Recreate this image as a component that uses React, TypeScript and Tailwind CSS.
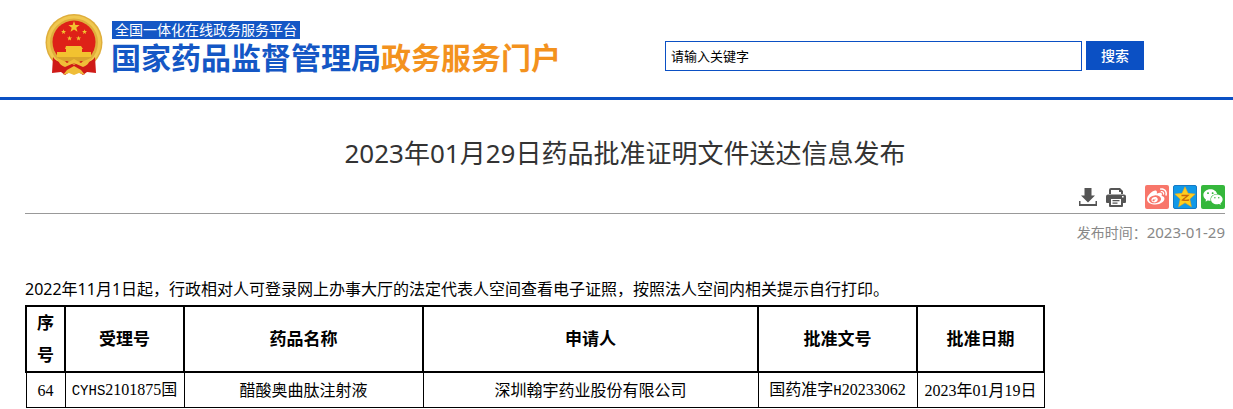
import type { ReactNode } from 'react'
import { FaWeibo } from 'react-icons/fa'
import { AiFillWechat } from 'react-icons/ai'

type Approval = {
  no: string
  acceptNo: string
  drug: string
  applicant: string
  approvalNo: string
  date: string
}

const approvals: Approval[] = [
  {
    no: '64',
    acceptNo: 'CYHS2101875国',
    drug: '醋酸奥曲肽注射液',
    applicant: '深圳翰宇药业股份有限公司',
    approvalNo: '国药准字H20233062',
    date: '2023年01月19日',
  },
]

// Digits are half as wide as a Chinese character, capitals are set smaller
function CodeText({ text }: { text: string }) {
  return (
    <>
      {text.split(/([A-Z]+|[0-9]+)/).map((part, i) => {
        if (/^[0-9]+$/.test(part)) {
          return (
            <span key={i} className="font-['Liberation_Serif',serif]">
              {part}
            </span>
          )
        }
        if (/^[A-Z]+$/.test(part)) {
          return (
            <span
              key={i}
              className="font-['Liberation_Mono',monospace] text-[14px]"
            >
              {part}
            </span>
          )
        }
        return part
      })}
    </>
  )
}

function Emblem() {
  return (
    <svg viewBox="0 0 58 62" className="h-[62px] w-[58px] shrink-0" aria-hidden="true">
      <circle cx="29" cy="28.500" r="28.500" fill="#dfae3c" />
      <circle cx="29" cy="28.500" r="25.500" fill="none" stroke="#f0c850" strokeWidth="3" />
      <circle cx="29" cy="28" r="21.500" fill="#de2118" />
      <g fill="#f2c230">
        <path id="star" d="M29 7l1.400 4 4.200.1-3.300 2.600 1.200 4.100-3.500-2.400-3.500 2.400 1.200-4.100-3.300-2.600 4.200-.1z" />
        <use href="#star" transform="translate(5.500 12) scale(.45)" />
        <use href="#star" transform="translate(26.500 12) scale(.45)" />
        <use href="#star" transform="translate(11.500 18.500) scale(.45)" />
        <use href="#star" transform="translate(20.500 18.500) scale(.45)" />
        <path d="M21 32h15l2 3h-1v3h9v5H12v-5h9v-3h-1z" />
      </g>
      <path d="M12 43h34l-6 6H18z" fill="#d9a52c" />
      <path d="M8 43c3 5 8 6 14 4l7 4 7-4c6 2 11 1 14-4l1 16-9-1-4 3-9-6-9 6-4-3-9 1z" fill="#cf1a17" />
      <path d="M12 44c4 2 7 2 10 5l7-4 7 4c3-3 6-3 10-5-2 6-5 8-8 9l-9-4-9 4c-3-1-6-3-8-9z" fill="#efbd38" />
      <path d="M18 61l4-5 7-4 7 4 4 5-6-2-5 2-5-2z" fill="#efbd38" />
    </svg>
  )
}

function DownloadIcon() {
  return (
    <svg viewBox="0 0 18 18" className="h-[18px] w-[18px]" fill="#555">
      <path d="M5.500 0h7v7.500h3.500L9 14.500 2 7.500h3.500z" />
      <path d="M0 13h1.500v3h15v-3H18v5H0z" />
    </svg>
  )
}

function PrintIcon() {
  return (
    <svg viewBox="0 0 20 19" className="h-[19px] w-5" fill="#555">
      <path d="M3 6V2a2 2 0 0 1 2-2h9l3 3v3h-2V4h-2V2H5v4z" />
      <path
        fillRule="evenodd"
        d="M2 6.500h16a2 2 0 0 1 2 2V14a1 1 0 0 1-1 1h-2v3a1 1 0 0 1-1 1H4a1 1 0 0 1-1-1v-3H1a1 1 0 0 1-1-1V8.500a2 2 0 0 1 2-2zM5 11v6h10v-6zM16 8v1.500h1.600V8z"
      />
      <path d="M6.500 12h7v1.300h-7zM6.500 14.500h5v1.300h-5z" />
    </svg>
  )
}

function QzoneIcon() {
  return (
    <svg viewBox="0 0 22 22" className="h-[22px] w-[22px]">
      <path
        d="M11 .8l3 6.500 7.200.8-5.400 5 1.600 7.600-6.400-3.900-6.400 3.900 1.600-7.600-5.400-5 7.200-.8z"
        fill="#ffce1f"
        stroke="#f0a818"
        strokeWidth=".6"
        strokeLinejoin="round"
      />
      <path d="M7.500 9.500h6.500L8.500 14c2 .5 4.500.5 6.500 0" fill="none" stroke="#c8690c" strokeWidth="1.300" />
    </svg>
  )
}

function Th({ className = '', children }: { className?: string; children: ReactNode }) {
  return (
    <th className={`border-2 border-black p-0 text-[17px] leading-8 font-bold ${className}`}>
      {children}
    </th>
  )
}

function Td({ text }: { text: string }) {
  return (
    <td className="h-[35px] border border-black p-0 text-center text-base leading-8 whitespace-nowrap">
      <CodeText text={text} />
    </td>
  )
}

export default function App() {
  return (
    <div className="bg-white font-['Noto_Sans','Noto_Sans_CJK_SC',sans-serif] text-black">
      <header className="flex h-[100px] items-start border-b-3 border-[#0b50c4] pl-[45px]">
        <a href="#" className="mt-[14px] flex">
          <Emblem />
          <span className="ml-2 flex flex-col items-start pt-[7px]">
            <span className="ml-px bg-[#1457c5] px-[3px] text-[14px] leading-[18px] text-white">
              全国一体化在线政务服务平台
            </span>
            <span className="text-[30px] leading-[38px] font-bold whitespace-nowrap text-[#1457c5]">
              国家药品监督管理局
              <span className="text-[#f3921e]">政务服务门户</span>
            </span>
          </span>
        </a>

        <form className="mt-[41px] mr-[89px] ml-[104px] flex flex-1 items-start gap-1">
          <input
            type="text"
            aria-label="关键字"
            defaultValue="请输入关键字"
            className="h-[30px] min-w-0 flex-1 border border-[#0b50c4] px-[5px] pb-0.5 text-[13px]"
          />
          <button
            type="button"
            className="h-[29px] w-[58px] bg-[#0b50c4] text-[14px] font-medium text-white"
          >
            搜索
          </button>
        </form>
      </header>

      <main className="mr-2 ml-[25px]">
        <h1 className="pt-[33px] text-center text-[26px] leading-10 text-[#333]">
          2023年01月29日药品批准证明文件送达信息发布
        </h1>

        <div className="mt-3 flex h-[29px] items-start justify-end border-b border-[#999]">
          <button type="button" aria-label="下载" className="mt-[3px] mr-[9px]">
            <DownloadIcon />
          </button>
          <button type="button" aria-label="打印" className="mt-[3px] mr-[19px]">
            <PrintIcon />
          </button>
          <div className="flex gap-1">
            <a
              href="#"
              aria-label="微博"
              className="flex h-6 w-6 items-center justify-center rounded-xs bg-[#f8766a] text-white"
            >
              <FaWeibo size={20} />
            </a>
            <a
              href="#"
              aria-label="QQ空间"
              className="h-6 w-6 overflow-hidden rounded-xs border border-[#1579c4] bg-[#1199e8]"
            >
              <QzoneIcon />
            </a>
            <a
              href="#"
              aria-label="微信"
              className="flex h-6 w-6 items-center justify-center rounded-xs bg-[#35b73c] text-white"
            >
              <AiFillWechat size={22} />
            </a>
          </div>
        </div>
        <p className="mt-[7px] text-right text-[14px] leading-6 text-[#888]">
          发布时间：<time className="text-[15px] leading-4">2023-01-29</time>
        </p>

        <p className="mt-7 text-base leading-8">
          2022年11月1日起，行政相对人可登录网上办事大厅的法定代表人空间查看电子证照，按照法人空间内相关提示自行打印。
        </p>
        <table className="w-[85%] table-fixed border-collapse">
          <colgroup>
            <col className="w-[39px]" />
            <col className="w-[119px]" />
            <col className="w-[239px]" />
            <col />
            <col className="w-[159px]" />
            <col className="w-[127px]" />
          </colgroup>
          <thead>
            <tr>
              <Th className="px-2">序号</Th>
              <Th>受理号</Th>
              <Th>药品名称</Th>
              <Th>申请人</Th>
              <Th>批准文号</Th>
              <Th>批准日期</Th>
            </tr>
          </thead>
          <tbody>
            {approvals.map((row) => (
              <tr key={row.no}>
                <Td text={row.no} />
                <Td text={row.acceptNo} />
                <Td text={row.drug} />
                <Td text={row.applicant} />
                <Td text={row.approvalNo} />
                <Td text={row.date} />
              </tr>
            ))}
          </tbody>
        </table>
      </main>
    </div>
  )
}
